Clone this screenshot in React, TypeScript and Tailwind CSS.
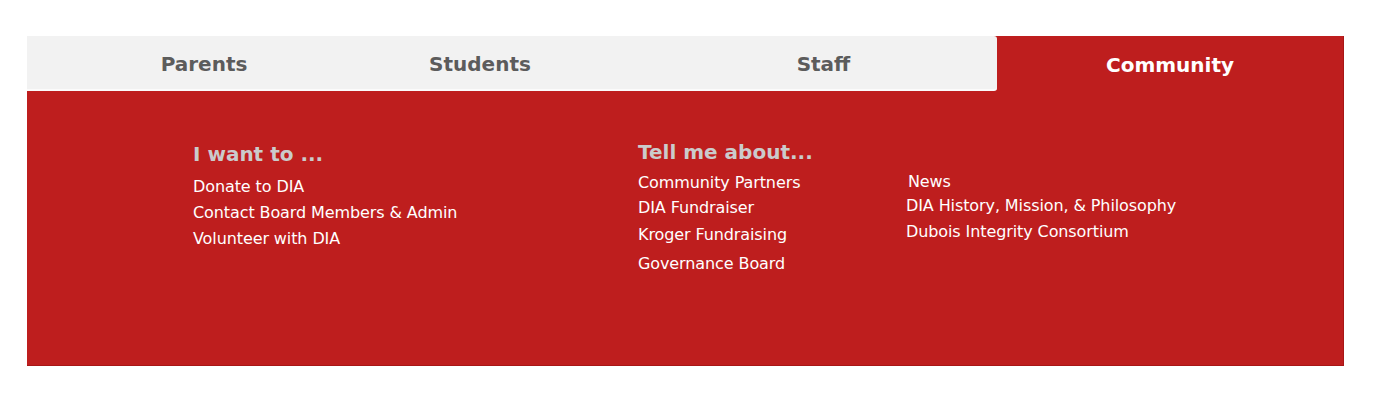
import React from "react";

const font = { fontFamily: '"DejaVu Sans", Verdana, sans-serif' };

export default function App() {
  return (
    <div className="w-[1400px] h-[411px] bg-white pt-[36px] pl-[27px]" style={font}>
      <div className="w-[1317px] h-[330px] bg-[#be1e1e] border-b border-r border-[#a81616] flex flex-col">
        {/* tab bar */}
        <div className="flex h-[56px]">
          <div className="flex h-[55px] w-[970px] pt-[2px] bg-[#f2f2f2] rounded-r-[3px] border-b-2 border-[#fbfbfb] text-[20px] font-bold text-[#5c5c5c]">
            <div className="w-[354px] flex items-center justify-center">Parents</div>
            <div className="w-[198px] flex items-center justify-center">Students</div>
            <div className="w-[71px]"></div>
            <div className="w-[347px] flex items-center justify-center">Staff</div>
          </div>
          <div className="flex-1 h-[55px] pt-[2px] flex items-center justify-center text-[20px] font-bold text-white">
            Community
          </div>
        </div>

        {/* dropdown content */}
        <div className="flex items-start pl-[166px] pt-[48px] text-white text-[16px] tracking-[-0.1px]">
          <div className="w-[445px] mt-[2px]">
            <h3 className="text-[20px] leading-[24px] font-bold text-[#cbcbcb] tracking-normal">I want to ...</h3>
            <ul className="mt-[8px] leading-[26px]">
              <li>Donate to DIA</li>
              <li>Contact Board Members &amp; Admin</li>
              <li>Volunteer with DIA</li>
            </ul>
          </div>

          <div className="w-[268px]">
            <h3 className="text-[20px] leading-[24px] font-bold text-[#cbcbcb] tracking-normal">Tell me about...</h3>
            <ul className="mt-[6px] leading-[25px]">
              <li>Community Partners</li>
              <li>DIA Fundraiser</li>
              <li className="mt-[2px]">Kroger Fundraising</li>
              <li className="mt-[4px]">Governance Board</li>
            </ul>
          </div>

          <div className="flex-1 mt-[29px]">
            <ul className="leading-[25px]">
              <li className="ml-[2px]">News</li>
              <li className="-mt-[1px]">DIA History, Mission, &amp; Philosophy</li>
              <li className="mt-[1px]">Dubois Integrity Consortium</li>
            </ul>
          </div>
        </div>
      </div>
    </div>
  );
}
